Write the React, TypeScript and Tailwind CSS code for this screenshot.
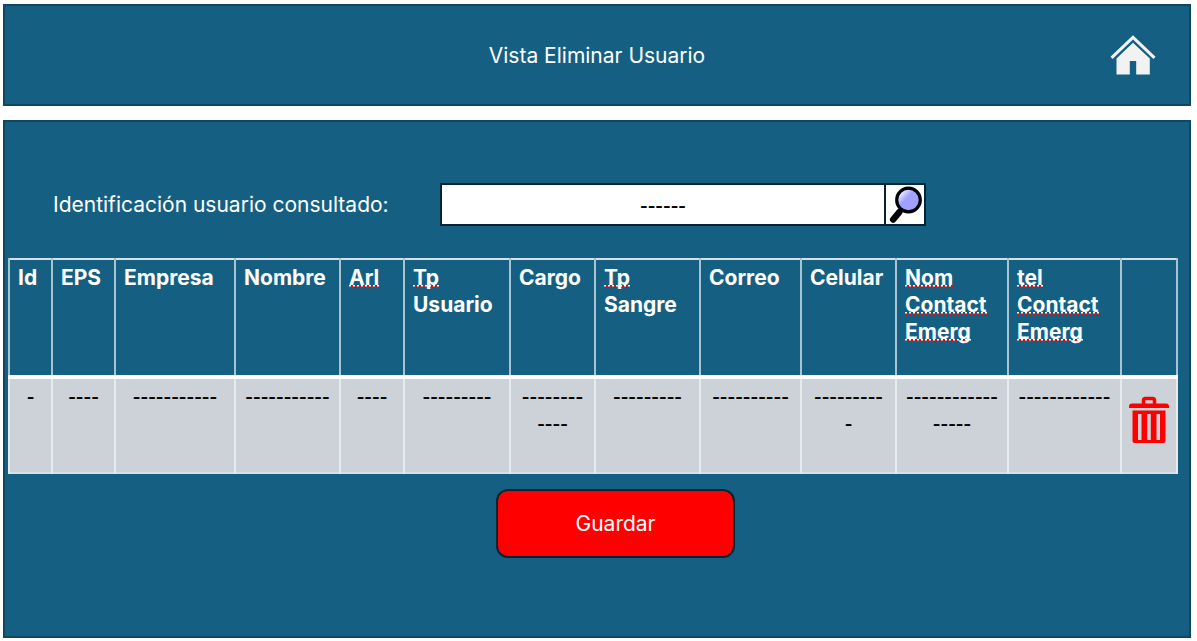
import { useState } from "react";

type Column = {
  lines: string[];
  flagged: boolean[];
  width: string;
  value: string[];
};

const columns: Column[] = [
  { lines: ["Id"], flagged: [false], width: "w-[43px]", value: ["-"] },
  { lines: ["EPS"], flagged: [false], width: "w-[63px]", value: ["----"] },
  { lines: ["Empresa"], flagged: [false], width: "w-[120px]", value: ["-----------"] },
  { lines: ["Nombre"], flagged: [false], width: "w-[105px]", value: ["-----------"] },
  { lines: ["Arl"], flagged: [true], width: "w-[64px]", value: ["----"] },
  { lines: ["Tp", "Usuario"], flagged: [true, false], width: "w-[106px]", value: ["---------"] },
  { lines: ["Cargo"], flagged: [false], width: "w-[85px]", value: ["--------", "----"] },
  { lines: ["Tp", "Sangre"], flagged: [true, false], width: "w-[105px]", value: ["---------"] },
  { lines: ["Correo"], flagged: [false], width: "w-[101px]", value: ["----------"] },
  { lines: ["Celular"], flagged: [false], width: "w-[95px]", value: ["---------", "-"] },
  { lines: ["Nom", "Contact", "Emerg"], flagged: [true, true, true], width: "w-[112px]", value: ["------------", "-----"] },
  { lines: ["tel", "Contact", "Emerg"], flagged: [true, true, true], width: "w-[113px]", value: ["------------"] },
];

function HomeIcon() {
  return (
    <svg viewBox="0 0 46 40" className="h-10 w-[46px]" aria-hidden="true">
      <path d="M1.500 22.800 23 2.300 44.500 22.800" fill="none" stroke="#f2f2f2" strokeWidth="3" />
      <path d="M23 7.800 39.800 23.500v16H26.200V26h-6.400v13.500H6.500v-16Z" fill="#f2f2f2" />
    </svg>
  );
}

function SearchIcon() {
  return (
    <svg viewBox="0 0 38 39" className="h-full w-full" aria-hidden="true">
      <defs>
        <linearGradient id="lens" x1="0.1" y1="0.15" x2="0.7" y2="0.75">
          <stop offset="0" stopColor="#ffffff" />
          <stop offset="0.5" stopColor="#a0a0ff" />
        </linearGradient>
      </defs>
      <path d="M15.500 24.500 12 28.500" stroke="#000" strokeWidth="5" />
      <path d="M13 27.500 7.200 34.500" stroke="#000" strokeWidth="6.500" strokeLinecap="round" />
      <circle cx="22.500" cy="15" r="11.800" fill="url(#lens)" stroke="#000" strokeWidth="3.200" />
    </svg>
  );
}

function TrashIcon() {
  return (
    <svg viewBox="0 0 40 48" className="h-12 w-10" aria-hidden="true">
      <path d="M14.500 8V4.500a2 2 0 0 1 2-2h7a2 2 0 0 1 2 2V8" fill="none" stroke="#f00" strokeWidth="3.500" />
      <path d="M3 7.500h34a3 3 0 0 1 3 3V12H0v-1.500a3 3 0 0 1 3-3Z" fill="#f00" />
      <path
        d="M3.500 14.500h33V45a2 2 0 0 1-2 2h-29a2 2 0 0 1-2-2ZM9 18v26h3.500V18ZM18.200 18v26h3.600V18ZM27.500 18v26H31V18Z"
        fill="#f00"
        fillRule="evenodd"
      />
    </svg>
  );
}

export default function App() {
  const [query, setQuery] = useState("------");

  return (
    <div className="flex min-h-screen flex-col gap-[14px] bg-white pt-1 pr-[6px] pb-[3px] pl-[3px] font-['Inter',sans-serif] text-[21px] leading-[27px] text-white">
      <header className="grid h-[102px] grid-cols-[1fr_auto_1fr] items-center border-2 border-[#0f4761] bg-[#156082] px-[33px]">
        <h1 className="col-start-2">Vista Eliminar Usuario</h1>
        <a href="#inicio" aria-label="Inicio" className="justify-self-end">
          <HomeIcon />
        </a>
      </header>

      <main className="flex flex-1 flex-col border-2 border-[#0f4761] bg-[#156082] pt-[61px] pr-[13px] pl-[3px]">
        <form className="flex items-center pl-[45px]" onSubmit={(e) => e.preventDefault()}>
          <label htmlFor="identificacion" className="w-[387px] shrink-0">
            Identificación usuario consultado:
          </label>
          <div className="flex h-[43px] w-[486px] border-2 border-[#042433] bg-white">
            <input
              id="identificacion"
              value={query}
              onChange={(e) => setQuery(e.target.value)}
              className="min-w-0 flex-1 pt-0.5 text-center font-['Liberation_Sans',sans-serif] text-[23px] text-black outline-none"
            />
            <button type="submit" aria-label="Buscar" className="w-10 border-l-2 border-[#042433]">
              <SearchIcon />
            </button>
          </div>
        </form>

        <table className="mt-8 w-full table-fixed border-collapse border-2 border-[#d5e1e7]">
          <thead>
            <tr className="h-[118px] border-b-4 border-white align-top">
              {columns.map((column, i) => (
                <th key={i} scope="col" className={`${column.width} border-x-2 border-[#a9c4d1] pt-1 pl-2 text-left font-bold`}>
                  {column.lines.map((line, j) => (
                    <span key={j} className="block h-[27px]">
                      <span
                        className={
                          column.flagged[j]
                            ? "inline-block bg-[repeating-linear-gradient(90deg,#fff_0_2px,transparent_2px_4px),repeating-linear-gradient(90deg,#ffffff80_0_2px,#f00_2px_4px),repeating-linear-gradient(90deg,#f00_0_2px,transparent_2px_4px)] bg-[length:100%_1px,100%_1px,100%_1px] bg-[position:0_21px,0_22px,0_23px] bg-no-repeat"
                            : "inline-block"
                        }
                      >
                        {line}
                      </span>
                    </span>
                  ))}
                </th>
              ))}
              <td className="w-[56px] border-x-2 border-[#a9c4d1]" />
            </tr>
          </thead>
          <tbody>
            <tr className="h-24 bg-[#ccd2d8] align-top text-black">
              {columns.map((column, i) => (
                <td key={i} className="border-x-2 border-[#e8ebee] pt-1 text-center font-['Liberation_Sans',sans-serif] text-[23px] whitespace-nowrap">
                  {column.value.map((line, j) => (
                    <span key={j} className="block">
                      {line}
                    </span>
                  ))}
                </td>
              ))}
              <td className="border-x-2 border-[#e8ebee] pt-[17px]">
                <button type="button" aria-label="Eliminar usuario" className="mx-auto block">
                  <TrashIcon />
                </button>
              </td>
            </tr>
          </tbody>
        </table>

        <button
          type="button"
          className="mt-[15px] ml-[488px] h-[69px] w-[239px] rounded-xl border-2 border-[#042433] bg-[#f00]"
        >
          Guardar
        </button>
      </main>
    </div>
  );
}
